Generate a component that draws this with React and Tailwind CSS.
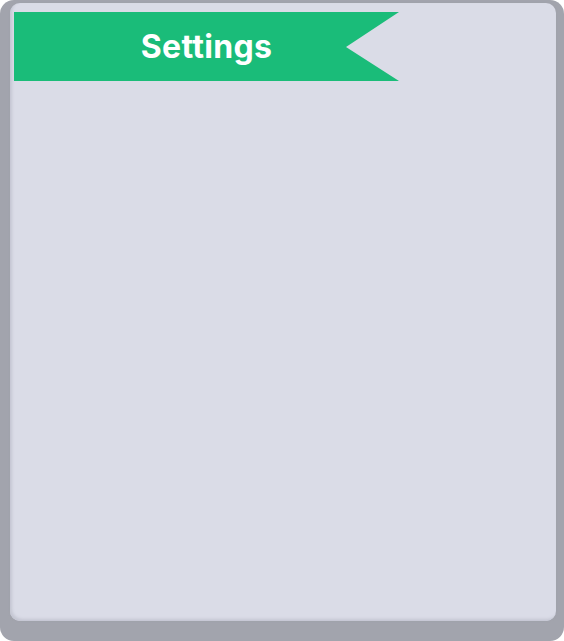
export default function App() {
  return (
    <div className="w-[564px] h-[641px] bg-white">
      <div className="w-full h-full rounded-[14px] bg-[#a2a4ad] pt-[3px] pl-[10px] pr-[8px] pb-[20px] flex">
        <div className="flex-1 rounded-[10px] bg-[#dadce7] shadow-[inset_2px_-2px_3px_#c4c6d2,0_0_2px_#9ea0a9] pt-[9px] pl-[4px]">
          <div className="relative w-[385px] h-[69px]">
            <svg className="absolute inset-0" width="385" height="69" viewBox="0 0 385 69">
              <polygon points="0,0 385,0 332,35 385,69 0,69" fill="#1abc79" />
            </svg>
            <div
              className="relative w-[385px] h-[69px] flex items-center justify-center text-white font-bold text-[32px] tracking-[0.3px]"
              style={{ fontFamily: 'Inter, "Noto Sans", sans-serif' }}
            >
              <span>Settings</span>
            </div>
          </div>
        </div>
      </div>
    </div>
  )
}
